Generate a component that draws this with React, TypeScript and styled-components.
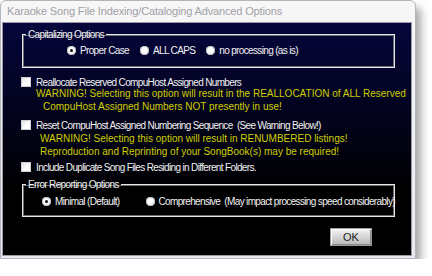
import React, { FC } from 'react';
import styled, { createGlobalStyle } from 'styled-components';

const GlobalStyle = createGlobalStyle`
    html, body {
        margin: 0;
        padding: 0;
        background: #ffffff;
    }
`;

const App: FC = () => {
    return (
        <>
            <GlobalStyle />
            <Window>
                <TitleBar>Karaoke Song File Indexing/Cataloging Advanced Options</TitleBar>
                <Content>
                    <Group>
                        <Legend>Capitalizing Options</Legend>
                        <RadioRow indent={44} spacing={11} padTop={3} padBottom={10}>
                            <RadioItem>
                                <Radio checked />
                                <span>Proper Case</span>
                            </RadioItem>
                            <RadioItem>
                                <Radio />
                                <span>ALL CAPS</span>
                            </RadioItem>
                            <RadioItem>
                                <Radio />
                                <span>no processing (as is)</span>
                            </RadioItem>
                        </RadioRow>
                    </Group>

                    <CheckRow top={9}>
                        <Checkbox />
                        <Label>Reallocate Reserved CompuHost Assigned Numbers</Label>
                    </CheckRow>
                    <Warning indent={15}>
                        WARNING! Selecting this option will result in the REALLOCATION of ALL Reserved
                    </Warning>
                    <Warning indent={22}>CompuHost Assigned Numbers NOT presently in use!</Warning>

                    <CheckRow top={7}>
                        <Checkbox />
                        <Label>Reset CompuHost Assigned Numbering Sequence&nbsp;&nbsp;(See Warning Below!)</Label>
                    </CheckRow>
                    <Warning indent={19} top={2}>
                        WARNING! Selecting this option will result in RENUMBERED listings!
                    </Warning>
                    <Warning indent={19}>Reproduction and Reprinting of your SongBook(s) may be required!</Warning>

                    <CheckRow top={4}>
                        <Checkbox />
                        <Label>Include Duplicate Song Files Residing in Different Folders.</Label>
                    </CheckRow>

                    <Group top={6}>
                        <Legend>Error Reporting Options</Legend>
                        <RadioRow indent={19} spacing={26} padTop={4} padBottom={8}>
                            <RadioItem>
                                <Radio checked />
                                <span>Minimal (Default)</span>
                            </RadioItem>
                            <RadioItem>
                                <Radio />
                                <span>Comprehensive&nbsp;&nbsp;(May impact processing speed considerably)</span>
                            </RadioItem>
                        </RadioRow>
                    </Group>

                    <Footer>
                        <OkButton>OK</OkButton>
                    </Footer>
                </Content>
            </Window>
        </>
    );
};

export default App;

const Window = styled.div`
    width: 416px;
    height: 259px;
    box-sizing: border-box;
    display: flex;
    flex-direction: column;
    background: linear-gradient(#f7f7f7, #e9e9ee);
    border: 1px solid #b4b4bc;
    border-radius: 6px 6px 0 0;
    padding: 0 3px 2px 1px;
    box-shadow: 5px 7px 9px rgba(0, 0, 0, 0.35);
`;

const TitleBar = styled.div`
    height: 21px;
    line-height: 21px;
    padding-left: 5px;
    font-family: 'Liberation Sans', sans-serif;
    font-size: 11px;
    letter-spacing: -0.15px;
    color: #a0a0a6;
    white-space: nowrap;
`;

const Content = styled.div`
    flex: 1;
    display: flex;
    flex-direction: column;
    padding: 5px 16px 0 18px;
    background: linear-gradient(#06063c 0px, #020216 110px, #000000 170px);
    border: 1px solid #9a9aa6;
    font-family: 'Liberation Sans', sans-serif;
    font-size: 10px;
    letter-spacing: -0.65px;
    color: #f2f2f2;
`;

const Group = styled.fieldset<{ top?: number }>`
    min-width: 0;
    margin: ${(p) => p.top ?? 0}px 0 0 1px;
    padding: 0;
    border: 1px solid #e8e8e8;
    box-shadow: inset 0 0 0 1px #6a6a70;
`;

const Legend = styled.legend`
    margin-left: 3px;
    padding: 0 2px;
    line-height: 13px;
    color: #f2f2f2;
`;

const RadioRow = styled.div<{ indent: number; spacing: number; padTop: number; padBottom: number }>`
    display: flex;
    align-items: center;
    height: 13px;
    gap: ${(p) => p.spacing}px;
    padding: ${(p) => p.padTop}px 0 ${(p) => p.padBottom}px ${(p) => p.indent}px;
`;

const RadioItem = styled.label`
    display: flex;
    align-items: center;
    gap: 4px;
    white-space: nowrap;
`;

const Radio = styled.span<{ checked?: boolean }>`
    position: relative;
    width: 9px;
    height: 9px;
    border-radius: 50%;
    background: radial-gradient(circle at 40% 35%, #ffffff 40%, #d0d0d0 100%);
    box-shadow: inset 0 0 0 1px #bdbdbd;

    &::after {
        content: '';
        display: ${(p) => (p.checked ? 'block' : 'none')};
        position: absolute;
        left: 3px;
        top: 3px;
        width: 3px;
        height: 3px;
        border-radius: 50%;
        background: #111;
    }
`;

const CheckRow = styled.div<{ top: number }>`
    display: flex;
    align-items: center;
    gap: 5px;
    margin-top: ${(p) => p.top}px;
    height: 10px;
`;

const Checkbox = styled.span`
    width: 10px;
    height: 10px;
    box-sizing: border-box;
    background: linear-gradient(135deg, #e4e4e4, #ffffff 60%);
    border: 1px solid #cfcfcf;
`;

const Label = styled.span`
    white-space: nowrap;
    line-height: 11px;
`;

const Warning = styled.div<{ indent: number; top?: number }>`
    margin-top: ${(p) => p.top ?? 0}px;
    padding-left: ${(p) => p.indent}px;
    font-size: 10px;
    letter-spacing: 0;
    line-height: 13px;
    color: #cfcf00;
    white-space: nowrap;
`;

const Footer = styled.div`
    display: flex;
    justify-content: flex-end;
    margin-top: 11px;
    padding-right: 23px;
`;

const OkButton = styled.button`
    width: 42px;
    height: 18px;
    padding: 0;
    font-family: 'Liberation Sans', sans-serif;
    font-size: 11px;
    color: #222;
    background: linear-gradient(#f4f4f4, #cfcfcf 60%, #b8b8b8);
    border: 1px solid #9a9a9a;
    box-shadow: inset 1px 1px 0 #ffffff, inset -1px -1px 0 #8c8c8c;
    border-radius: 0;
`;
